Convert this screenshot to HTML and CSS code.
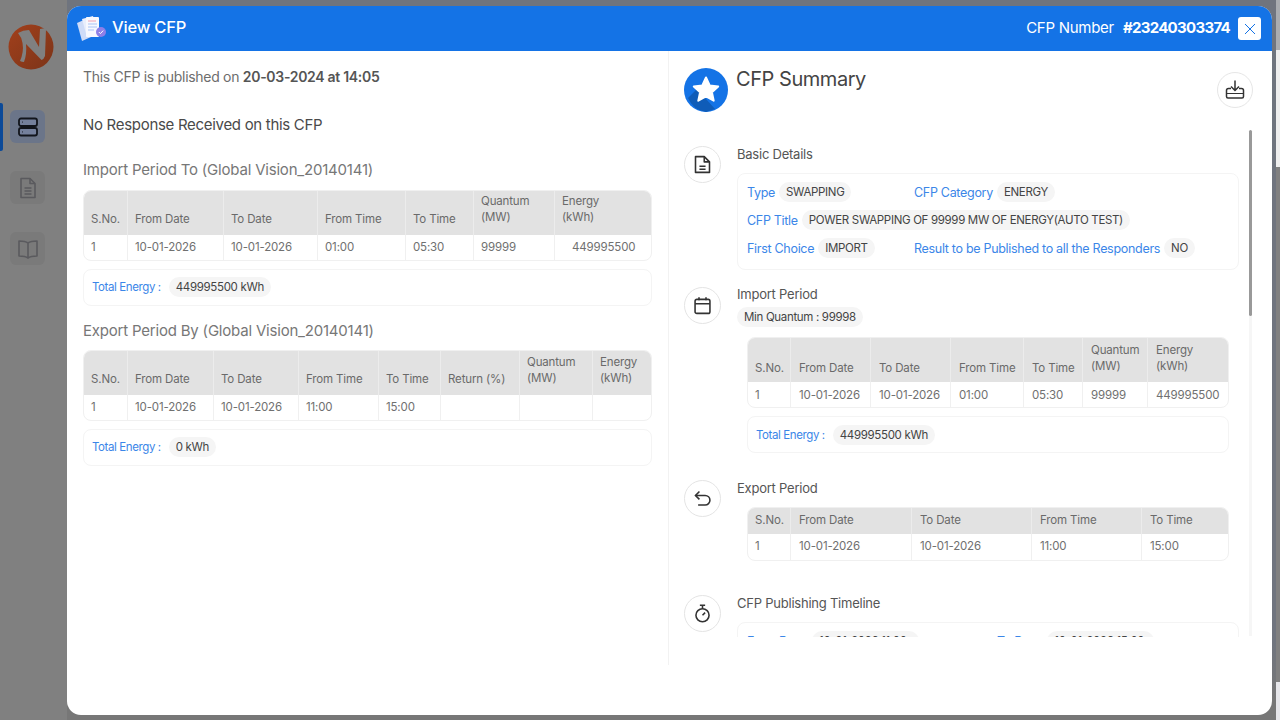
FILE: index.html
```html
<!DOCTYPE html>
<html lang="en">
<head>
<meta charset="utf-8">
<title>View CFP</title>
<link rel="stylesheet" href="styles.css">
</head>
<body>
<div class="app">
  <aside class="rail">
    <div class="logo">
      <svg viewBox="0 0 46 46" width="46" height="46"><defs><linearGradient id="lg" x1="0" y1="0" x2="1" y2="1"><stop offset="0" stop-color="#a2401c"/><stop offset="1" stop-color="#7c3418"/></linearGradient></defs><circle cx="23" cy="23" r="22.500" fill="url(#lg)"/><path d="M10 9Q15 6 21 6L31 23 32 5Q35 4 38 5L37 32Q36 35 33.500 36L18 20Q19 30 16 38 14 38 12 37 16 28 14.500 19 13.500 13 10 9z" fill="#808080"/></svg>
    </div>
    <nav class="rail-nav">
      <a class="rail-item active"><svg viewBox="0 0 24 24" width="24" height="24" fill="none" stroke="#12151c" stroke-width="1.800"><rect x="3" y="3.500" width="18" height="7.500" rx="2" fill="#74809c"/><rect x="3" y="13" width="18" height="7.500" rx="2" fill="#74809c"/><path d="M6.500 7.200h.5M6.500 16.800h.5"/></svg></a>
      <a class="rail-item"><svg viewBox="0 0 24 24" width="24" height="24" fill="none" stroke="#5a5a5e" stroke-width="1.600" stroke-linejoin="round"><path d="M5 2.500h9l5 5v14H5z"/><path d="M14 2.500v5h5M8.500 12h7M8.500 15h7M8.500 18h7"/></svg></a>
      <a class="rail-item"><svg viewBox="0 0 24 24" width="24" height="24" fill="none" stroke="#5a5a5e" stroke-width="1.600" stroke-linejoin="round"><path d="M12 6C10 4.500 7 4 3 4v15c4 0 7 .5 9 2 2-1.500 5-2 9-2V4c-4 0-7 .5-9 2zM12 6v15"/></svg></a>
    </nav>
  </aside>
  <div class="stage">
    <section class="modal">
      <header class="modal-head">
        <svg class="head-icon" viewBox="0 0 32 28" width="32" height="28"><path d="M1 8l9-4 5 18-9 4z" fill="#cfdcf8"/><path d="M6 4l11-3 5 18-11 3z" fill="#e9eefc"/><rect x="10" y="2" width="13" height="20" rx="1" fill="#f7f8fe"/><path d="M12 6h8" stroke="#f2a0b0" stroke-width="1.200"/><path d="M12 9h9M12 12h9M12 15h6" stroke="#a9c4f5" stroke-width="1.200"/><circle cx="25" cy="17" r="5" fill="#8d7fe8"/><path d="M22.800 17l1.600 1.600 2.800-3" stroke="#fff" fill="none" stroke-width="1"/></svg>
        <h1 class="modal-title">View CFP</h1>
        <div class="cfp-num">CFP Number <b>#23240303374</b></div>
        <button class="close" aria-label="Close"><svg viewBox="0 0 12 12" width="12" height="12" fill="none" stroke="#1473e6" stroke-width="1"><path d="M1 1l10 10M11 1L1 11"/></svg></button>
      </header>
      <div class="modal-body">
        <div class="left">
          <p class="pub">This CFP is published on <b>20-03-2024 at 14:05</b></p>
          <p class="none">No Response Received on this CFP</p>
          <h2 class="sect first">Import Period To (Global Vision_20140141)</h2>
          <table class="tbl ta">
            <thead><tr><th>S.No.</th><th>From Date</th><th>To Date</th><th>From Time</th><th>To Time</th><th class="q">Quantum<br>(MW)</th><th class="q">Energy<br>(kWh)</th></tr></thead>
            <tbody><tr><td>1</td><td>10-01-2026</td><td>10-01-2026</td><td>01:00</td><td>05:30</td><td>99999</td><td class="ind">449995500</td></tr></tbody>
          </table>
          <div class="total"><span class="lbl-s">Total Energy :</span><span class="chip">449995500 kWh</span></div>
          <h2 class="sect">Export Period By (Global Vision_20140141)</h2>
          <table class="tbl tb">
            <thead><tr><th>S.No.</th><th>From Date</th><th>To Date</th><th>From Time</th><th>To Time</th><th>Return (%)</th><th class="q">Quantum<br>(MW)</th><th class="q">Energy<br>(kWh)</th></tr></thead>
            <tbody><tr><td>1</td><td>10-01-2026</td><td>10-01-2026</td><td>11:00</td><td>15:00</td><td></td><td></td><td></td></tr></tbody>
          </table>
          <div class="total"><span class="lbl-s">Total Energy :</span><span class="chip">0 kWh</span></div>
        </div>
        <div class="right">
          <div class="sum-head">
            <svg class="star" viewBox="0 0 44 44" width="44" height="44"><circle cx="22" cy="22" r="22" fill="#1473e6"/><path d="M4 30L13 21 31 41 22 44Q9 42 4 30z" fill="#0f5cb8"/><path d="M22 9.500l3.700 8 8.500.9-6.300 5.800 1.800 8.500-7.700-4.400-7.700 4.400 1.800-8.500-6.300-5.800 8.500-.9z" fill="#fff" stroke="#fff" stroke-width="2" stroke-linejoin="round"/></svg>
            <h2 class="sum-title">CFP Summary</h2>
            <button class="dl" aria-label="Download"><svg viewBox="0 0 24 24" width="24" height="24" fill="none" stroke="#333" stroke-width="1.500"><path d="M12 2.500v10M8 8.500l4 4 4-4"/><path d="M8 10.500H5.500q-2 0-2 2v6q0 1.500 1.500 1.500h14q1.500 0 1.500-1.500v-6q0-2-2-2H16"/><path d="M3.500 15.500h17" stroke-width="1"/></svg></button>
          </div>
          <div class="scroll">
            <div class="rows">
              <div class="row r1">
                <span class="ic"><svg viewBox="0 0 24 24" width="21" height="21" fill="none" stroke="#333" stroke-width="1.800" stroke-linejoin="round"><path d="M4 3h10l6 6v12H4z"/><path d="M14 3v6h6M8.500 14h7M8.500 17.500h7"/></svg></span>
                <div class="row-main">
                  <h3 class="row-title">Basic Details</h3>
                  <div class="card details">
                    <div class="dl-line"><span class="cell c1"><span class="lbl">Type</span><span class="chip">SWAPPING</span></span><span class="cell"><span class="lbl">CFP Category</span><span class="chip">ENERGY</span></span></div>
                    <div class="dl-line"><span class="cell"><span class="lbl">CFP Title</span><span class="chip">POWER SWAPPING OF 99999 MW OF ENERGY(AUTO TEST)</span></span></div>
                    <div class="dl-line"><span class="cell c1"><span class="lbl">First Choice</span><span class="chip">IMPORT</span></span><span class="cell"><span class="lbl">Result to be Published to all the Responders</span><span class="chip">NO</span></span></div>
                  </div>
                </div>
              </div>
              <div class="row r2">
                <span class="ic"><svg viewBox="0 0 24 24" width="21" height="21" fill="none" stroke="#333" stroke-width="1.800"><rect x="3.500" y="5" width="17" height="16" rx="2"/><path d="M3.500 10h17M8 2.500V6M16 2.500V6"/></svg></span>
                <div class="row-main">
                  <h3 class="row-title">Import Period</h3>
                  <span class="chip min">Min Quantum : 99998</span>
                  <div class="inset">
                    <table class="tbl tc">
                      <thead><tr><th>S.No.</th><th>From Date</th><th>To Date</th><th>From Time</th><th>To Time</th><th class="q">Quantum<br>(MW)</th><th class="q">Energy<br>(kWh)</th></tr></thead>
                      <tbody><tr><td>1</td><td>10-01-2026</td><td>10-01-2026</td><td>01:00</td><td>05:30</td><td>99999</td><td>449995500</td></tr></tbody>
                    </table>
                    <div class="total"><span class="lbl-s">Total Energy :</span><span class="chip">449995500 kWh</span></div>
                  </div>
                </div>
              </div>
              <div class="row r3">
                <span class="ic"><svg viewBox="0 0 24 24" width="21" height="21" fill="none" stroke="#333" stroke-width="1.800"><path d="M8.500 4L4 8.500 8.500 13"/><path d="M4 8.500h11a5.500 5.500 0 0 1 0 11H7"/></svg></span>
                <div class="row-main">
                  <h3 class="row-title">Export Period</h3>
                  <div class="inset">
                    <table class="tbl td">
                      <thead><tr><th>S.No.</th><th>From Date</th><th>To Date</th><th>From Time</th><th>To Time</th></tr></thead>
                      <tbody><tr><td>1</td><td>10-01-2026</td><td>10-01-2026</td><td>11:00</td><td>15:00</td></tr></tbody>
                    </table>
                  </div>
                </div>
              </div>
              <div class="row r4">
                <span class="ic"><svg viewBox="0 0 24 24" width="21" height="21" fill="none" stroke="#333" stroke-width="1.800"><circle cx="12" cy="14" r="7.500"/><path d="M9 2.500h6M12 2.500v4M12 14l3-3"/></svg></span>
                <div class="row-main">
                  <h3 class="row-title">CFP Publishing Timeline</h3>
                  <div class="card details">
                    <div class="dl-line"><span class="cell c2"><span class="lbl">From Date</span><span class="chip">10-01-2026 11:00</span></span><span class="cell c3"><span class="lbl">To Date</span><span class="chip">10-01-2026 15:00</span></span></div>
                  </div>
                </div>
              </div>
            </div>
          </div>
          <i class="track"></i>
          <i class="thumb"></i>
        </div>
      </div>
    </section>
  </div>
  <i class="edge"></i>
</div>
</body>
</html>
```
FILE: styles.css
```css
*{box-sizing:border-box}
html,body{margin:0;height:100%;overflow:hidden}
body{font-family:Inter,"Noto Sans",sans-serif;color:#5f5f5f;background:#6f747e}
.app{display:flex;height:720px;position:relative}
.rail{width:67px;background:#808080;flex:none;padding-top:24px}
.logo{margin-left:8px;height:46px}
.rail-nav{display:flex;flex-direction:column;gap:28px;margin-top:40px}
.rail-item{width:35px;height:33px;margin-left:10px;border-radius:6px;background:#7a7a7a;display:flex;align-items:center;justify-content:center;position:relative}
.rail-item.active{background:#6b7589}
.rail-item.active::before{content:"";position:absolute;left:-10px;top:-7px;width:3px;height:48px;background:#0c4a98;border-radius:0 2px 2px 0}
.stage{flex:1;padding:6px 8px 5px 0;min-width:0;background:linear-gradient(#6f747e 0,#6f747e 640px,#777 700px)}
.edge{position:absolute;right:0;top:0;bottom:0;width:4px;background:linear-gradient(#a9acb0 0,#a9acb0 50px,#eee 50px,#eee 167px,#808080 167px,#808080 682px,#e6e6ea 682px)}
.modal{height:709px;background:#fff;border-radius:14px;overflow:hidden;display:flex;flex-direction:column}
.modal-head{height:45px;flex:none;background:#1473e6;display:flex;align-items:center;padding:0 11px 0 9px;color:#fff}
.head-icon{flex:none}
.modal-title{font-size:16.500px;font-weight:500;margin:0 0 3px 4px;letter-spacing:-.2px;flex:1}
.cfp-num{font-size:15px;letter-spacing:-.27px;margin-bottom:3px}
.cfp-num b{margin-left:5px;font-weight:700;letter-spacing:-.7px}
.close{width:23px;height:23px;margin-left:8px;background:#fff;border:0;border-radius:3px;padding:0;display:flex;align-items:center;justify-content:center}
.modal-body{flex:1;display:flex;min-height:0}
.left{width:602px;height:614px;flex:none;padding:16px 16px 0;border-right:1px solid #f2f2f2}
.pub{font-size:14px;margin:0;line-height:20px;color:#6d6d6d;letter-spacing:-.3px}
.pub b{font-weight:600;color:#555}
.none{font-size:15px;margin:28px 0 0;line-height:20px;color:#4a4a4a;letter-spacing:-.3px}
.sect{font-size:15px;font-weight:400;margin:0;line-height:20px;color:#777;letter-spacing:-.2px;padding-top:15px}
.sect.first{padding-top:25px}
.tbl{border-collapse:separate;border-spacing:0;table-layout:fixed;width:100%;font-size:11.500px;margin-top:9px;border:1px solid #f0f0f0;border-radius:8px;overflow:hidden;letter-spacing:-.15px}
.ta{margin-top:10px}
.tbl th{background:#e2e2e2;font-weight:400;text-align:left;vertical-align:bottom;padding:4px 0 8px 8px;line-height:16px;color:#6a6a6a;border-right:1px solid #ececec;white-space:nowrap}
.tbl td{height:25px;padding:0 0 0 8px;color:#707070;border-right:1px solid #f0f0f0}
.tbl th:first-child,.tbl td:first-child{padding-left:7px}
.ta th,.ta td,.tb th,.tb td{padding-left:7px}
.ta td,.tb td{padding-bottom:2px}
.ta .q{padding-top:2px;padding-bottom:10px}
.tb .q{padding-top:3px;padding-bottom:9px}
.tc th{padding-bottom:6px}
.tc th.q{padding-bottom:8px}
.tbl th:last-child,.tbl td:last-child{border-right:0}
.ta th:nth-child(1){width:44px}.ta th:nth-child(2){width:96px}.ta th:nth-child(3){width:94px}.ta th:nth-child(4){width:88px}.ta th:nth-child(5){width:68px}.ta th:nth-child(6){width:81px}
.tb th:nth-child(1){width:44px}.tb th:nth-child(2){width:86px}.tb th:nth-child(3){width:85px}.tb th:nth-child(4){width:80px}.tb th:nth-child(5){width:62px}.tb th:nth-child(6){width:79px}.tb th:nth-child(7){width:73px}
.tc th:nth-child(1){width:43px}.tc th:nth-child(2){width:80px}.tc th:nth-child(3){width:80px}.tc th:nth-child(4){width:73px}.tc th:nth-child(5){width:59px}.tc th:nth-child(6){width:65px}
.td th:nth-child(1){width:43px}.td th:nth-child(2){width:121px}.td th:nth-child(3){width:120px}.td th:nth-child(4){width:110px}
.tbl.td th{height:26px;padding-top:0;padding-bottom:2px;vertical-align:middle}
.tbl.td td{height:26px;padding-bottom:2px}
.tbl .ind{padding-left:17px}
.total{height:37px;margin-top:8px;border:1px solid #f4f4f4;border-radius:8px;display:flex;align-items:center;padding:0 8px 2px;gap:8px}
.lbl-s{font-size:11.500px;color:#3b86e8;letter-spacing:-.4px}
.chip{display:inline-block;background:#f5f5f5;border-radius:10px;padding:0 7px;line-height:20px;font-size:11.500px;color:#444;letter-spacing:-.33px}
.right{flex:1;position:relative;min-width:0;padding:17px 0 0 15px}
.sum-head{display:flex;height:44px}
.sum-title{font-size:20px;font-weight:400;margin:0 0 0 8px;line-height:22px;color:#444;letter-spacing:-.45px;flex:1}
.dl{width:36px;height:36px;border:1px solid #e6e6e6;border-radius:50%;background:#fff;margin:4px 19px 0 0;padding:0;display:flex;align-items:center;justify-content:center}
.scroll{height:507px;overflow:hidden;margin-top:18px;padding-top:16px}
.rows{display:flex;flex-direction:column;padding-right:33px}
.row{display:flex;gap:16px}
.ic{width:37px;height:37px;flex:none;border:1px solid #e4e4e4;border-radius:50%;display:flex;align-items:center;justify-content:center}
.row-main{flex:1;min-width:0}
.row-title{font-size:13px;font-weight:400;margin:0;padding-bottom:2px;line-height:16px;color:#555;letter-spacing:-.23px}
.r2 .row-title{margin-top:-1px}
.r2{margin-top:17px}
.r3{margin-top:27px}
.r4{margin-top:34px}
.card{border:1px solid #f4f4f4;border-radius:8px}
.details{margin-top:9px;padding:4px 9px;height:97px}
.dl-line{display:flex;height:28px;align-items:center}
.cell{display:flex;align-items:center;gap:4px}
.c1{width:167px}
.c2{width:250px}
.c2,.c3{gap:7px}
.c2 .chip,.c3 .chip{min-width:107px}
.lbl{font-size:12.500px;color:#3b86e8;letter-spacing:-.3px}
.min{margin-top:3px;display:block;width:fit-content}
.inset{margin:10px 10px 0}
.inset .tbl{margin-top:0}
.inset .total{padding-bottom:0}
.r3 .inset{margin-top:9px}
.track{position:absolute;right:20px;top:265px;width:3px;height:320px;background:#f6f6f6}
.thumb{position:absolute;right:20px;top:79px;width:3px;height:186px;background:#999;border-radius:2px}
```
